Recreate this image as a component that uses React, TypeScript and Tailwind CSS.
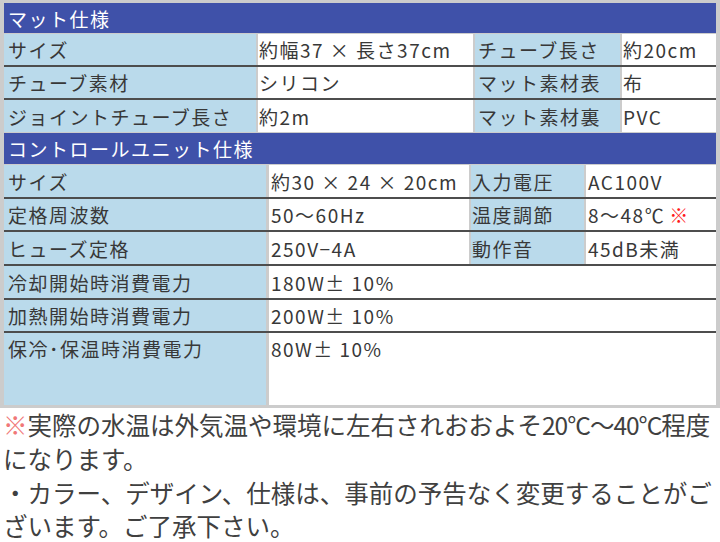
import React from "react";

const F = '"Noto Sans CJK JP", "Noto Sans", sans-serif';

function Lbl({ w, children, pl = "pl-[4px]" }: { w: string; children: React.ReactNode; pl?: string }) {
  return (
    <div className={`${w} ${pl} h-full bg-[#badaeb] flex items-center whitespace-nowrap`}>{children}</div>
  );
}
function Val({ w, children, pl = "pl-[2px]" }: { w: string; children: React.ReactNode; pl?: string }) {
  return (
    <div className={`${w} ${pl} h-full bg-white flex items-center whitespace-nowrap`}>{children}</div>
  );
}

function Header({ h, children }: { h: string; children: React.ReactNode }) {
  return (
    <div className={`${h} w-[712px] bg-[#3f51a9] text-white flex items-center pl-[4px] whitespace-nowrap`}>
      {children}
    </div>
  );
}

export default function App() {
  return (
    <div className="w-[720px] h-[542px] bg-white overflow-hidden" style={{ fontFamily: F }}>
      <div
        className="w-[720px] bg-[#cccccc] pt-[3px] pl-[4px] pb-[3px] text-[#383838] text-[19px] tracking-[1.5px] leading-none"
      >
        <Header h="h-[30px]">マット仕様</Header>
        <div className="h-[1px]" />
        <div className="h-[31px] flex gap-[2px]">
          <Lbl w="w-[252px]">サイズ</Lbl>
          <Val w="w-[215px]" pl="pl-[1px]">約幅37 × 長さ37cm</Val>
          <Lbl w="w-[145px]" pl="pl-[3px]">チューブ長さ</Lbl>
          <Val w="w-[94px]" pl="pl-[1px]">約20cm</Val>
        </div>
        <div className="h-[2px] w-[712px] bg-[#4d4d4d]" />
        <div className="h-[31px] flex gap-[2px]">
          <Lbl w="w-[252px]">チューブ素材</Lbl>
          <Val w="w-[215px]" pl="pl-[1px]">シリコン</Val>
          <Lbl w="w-[145px]" pl="pl-[3px]">マット素材表</Lbl>
          <Val w="w-[94px]" pl="pl-[1px]">布</Val>
        </div>
        <div className="h-[2px] w-[712px] bg-[#4d4d4d]" />
        <div className="h-[32px] flex gap-[2px]">
          <Lbl w="w-[252px]">ジョイントチューブ長さ</Lbl>
          <Val w="w-[215px]" pl="pl-[1px]">約2m</Val>
          <Lbl w="w-[145px]" pl="pl-[3px]">マット素材裏</Lbl>
          <Val w="w-[94px]" pl="pl-[1px]">PVC</Val>
        </div>
        <div className="h-[1px]" />
        <Header h="h-[31px]">コントロールユニット仕様</Header>
        <div className="h-[1px]" />
        <div className="h-[32px] flex gap-[2px]">
          <Lbl w="w-[262px] mr-[1px]">サイズ</Lbl>
          <Val w="w-[200px]">約30 × 24 × 20cm</Val>
          <Lbl w="w-[113px]" pl="pl-[1px]">入力電圧</Lbl>
          <Val w="w-[130px]">AC100V</Val>
        </div>
        <div className="h-[2px] w-[712px] bg-[#4d4d4d]" />
        <div className="h-[31px] flex gap-[2px]">
          <Lbl w="w-[262px] mr-[1px]">定格周波数</Lbl>
          <Val w="w-[200px]">50〜60Hz</Val>
          <Lbl w="w-[113px]" pl="pl-[1px]">温度調節</Lbl>
          <Val w="w-[130px]">
            8〜48℃ <span className="text-[#ff1a1a] ml-[4px]">※</span>
          </Val>
        </div>
        <div className="h-[2px] w-[712px] bg-[#4d4d4d]" />
        <div className="h-[32px] flex gap-[2px]">
          <Lbl w="w-[262px] mr-[1px]">ヒューズ定格</Lbl>
          <Val w="w-[200px]">250V−4A</Val>
          <Lbl w="w-[113px]" pl="pl-[1px]">動作音</Lbl>
          <Val w="w-[130px]">45dB未満</Val>
        </div>
        <div className="h-[2px] w-[712px] bg-[#4d4d4d]" />
        <div className="h-[32px] flex gap-[2px]">
          <Lbl w="w-[262px] mr-[1px]">冷却開始時消費電力</Lbl>
          <Val w="w-[447px]">180W± 10%</Val>
        </div>
        <div className="h-[2px] w-[712px] bg-[#4d4d4d]" />
        <div className="h-[31px] flex gap-[2px]">
          <Lbl w="w-[262px] mr-[1px]">加熱開始時消費電力</Lbl>
          <Val w="w-[447px]">200W± 10%</Val>
        </div>
        <div className="h-[2px] w-[712px] bg-[#4d4d4d]" />
        <div className="h-[72px] flex gap-[2px]">
          <div className="w-[262px] mr-[1px] h-full bg-[#badaeb] pl-[4px] pt-[6px] whitespace-nowrap">
            保冷･保温時消費電力
          </div>
          <div className="w-[447px] h-full bg-white pl-[2px] pt-[6px] whitespace-nowrap">80W± 10%</div>
        </div>
      </div>
      <div className="pl-[3px] text-[24.5px] leading-[34px] text-[#404040] whitespace-nowrap">
        <div>
          <span className="text-[#f07878]">※</span>実際の水温は外気温や環境に左右されおおよそ
          <span className="tracking-[-1px]">20°C〜40°C</span>程度
        </div>
        <div>になります。</div>
        <div>・カラー、デザイン、仕様は、事前の予告なく変更することがご</div>
        <div className="leading-[32px]">ざいます。ご了承下さい。</div>
      </div>
    </div>
  );
}
